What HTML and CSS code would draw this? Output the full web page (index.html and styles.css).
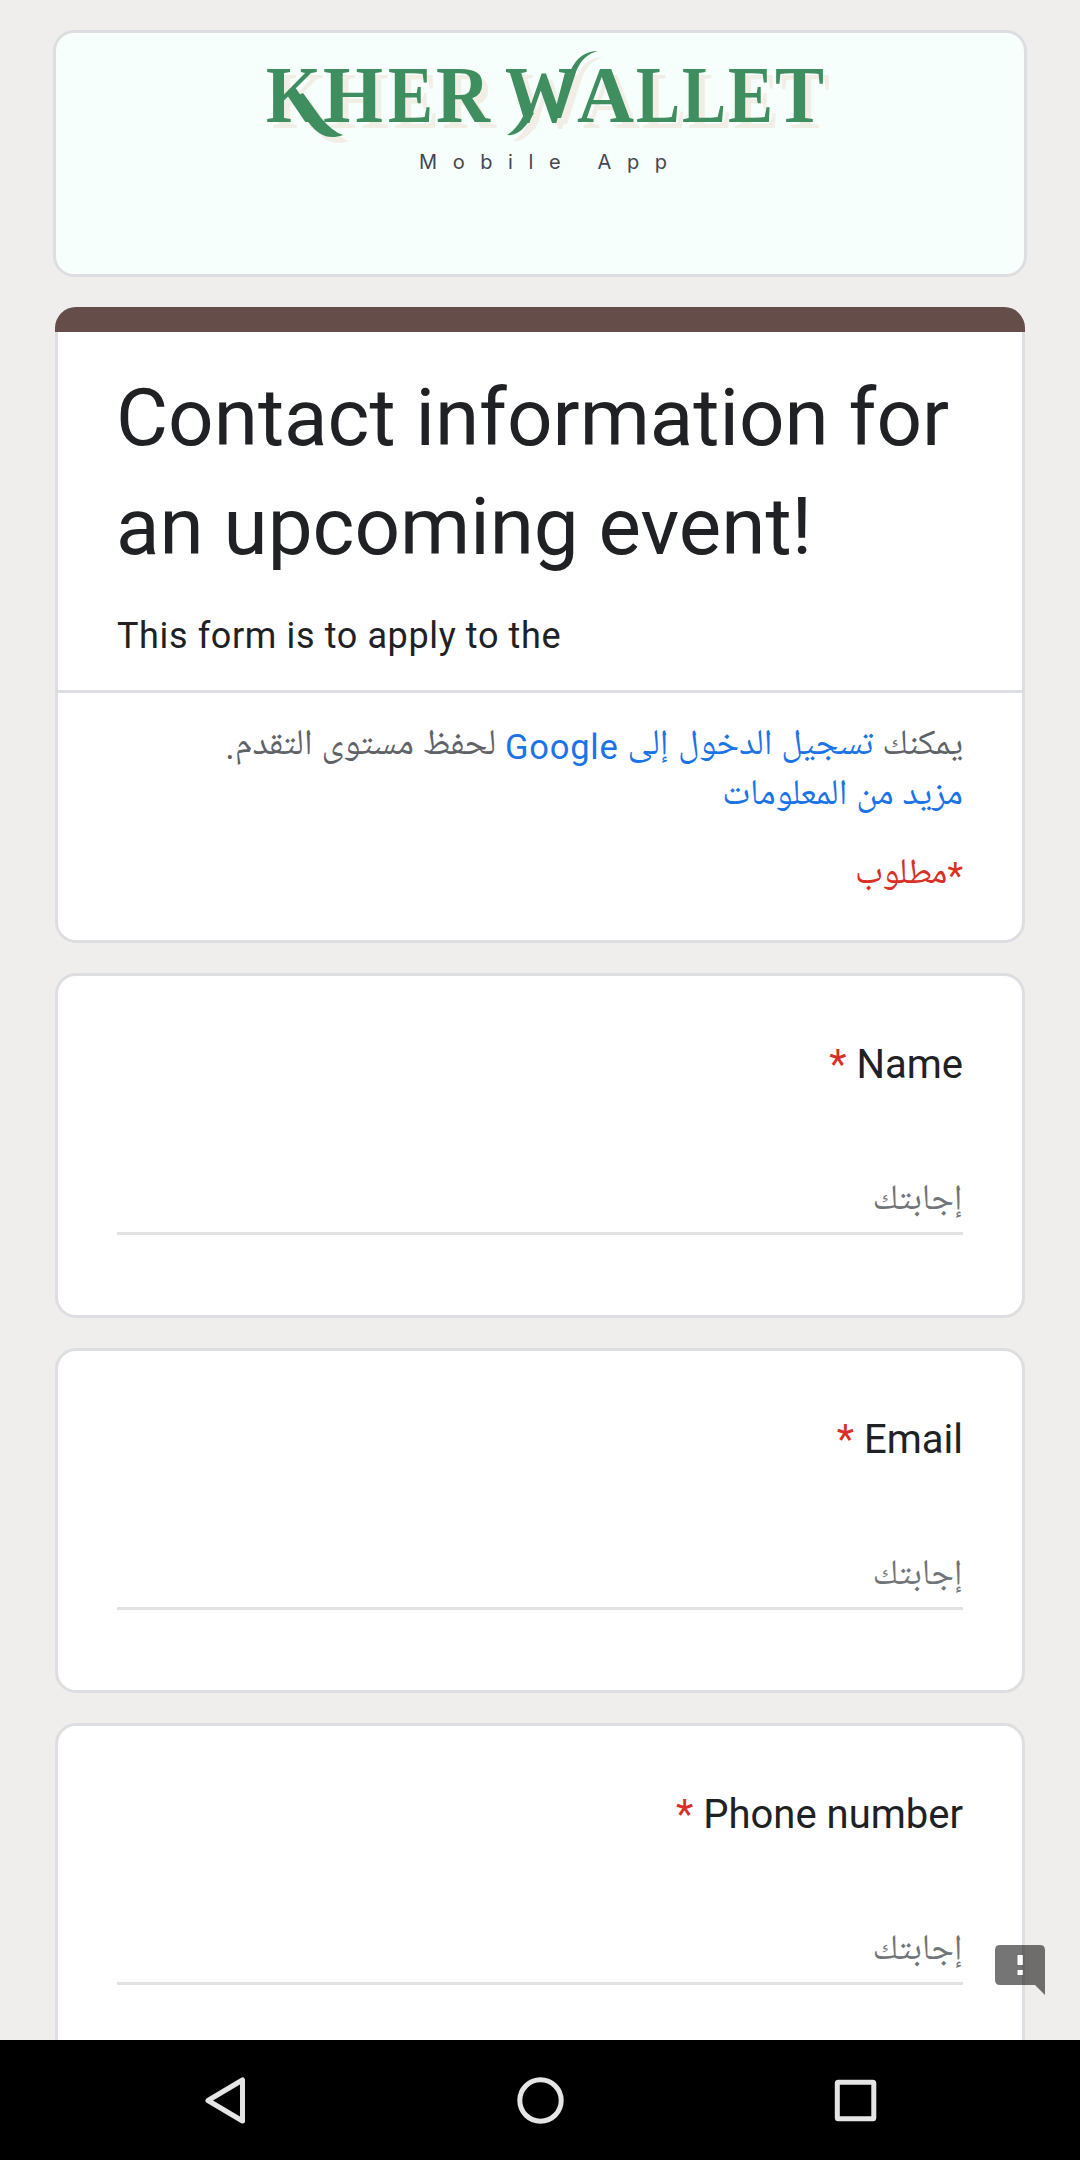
FILE: index.html
```html
<!DOCTYPE html>
<html lang="ar" dir="rtl">
<head>
<meta charset="utf-8">
<title>Contact information for an upcoming event!</title>
<link rel="stylesheet" href="styles.css">
</head>
<body>
<main class="form">
  <header class="banner">
    <svg class="logo" viewBox="0 0 974 247" direction="ltr">
      <g class="logo-ink">
        <text class="wordmark" y="92"><tspan x="213" textLength="55" lengthAdjust="spacingAndGlyphs">K</tspan><tspan x="270" textLength="60" lengthAdjust="spacingAndGlyphs">H</tspan><tspan x="335" textLength="45" lengthAdjust="spacingAndGlyphs">E</tspan><tspan x="383" textLength="54" lengthAdjust="spacingAndGlyphs">R</tspan></text>
        <text class="wordmark" y="92"><tspan x="452" textLength="70" lengthAdjust="spacingAndGlyphs">W</tspan><tspan x="524" textLength="57" lengthAdjust="spacingAndGlyphs">A</tspan><tspan x="583" textLength="44" lengthAdjust="spacingAndGlyphs">L</tspan><tspan x="629" textLength="44" lengthAdjust="spacingAndGlyphs">L</tspan><tspan x="675" textLength="45" lengthAdjust="spacingAndGlyphs">E</tspan><tspan x="722" textLength="49" lengthAdjust="spacingAndGlyphs">T</tspan></text>
        <path d="M238 68L256 93C266 106 276 110 290 105Q280 102 268 88L250 63Z"/>
        <path d="M474 78C468 92 462 100 454 105Q468 107 481 83Z"/>
        <path d="M503 88L517 42C523 27 533 21 545 21Q529 25 523 42L508 88Z"/>
      </g>
      <text class="tagline" x="366" y="138.500">Mobile App</text>
    </svg>
  </header>

  <section class="card intro">
    <div class="accent"></div>
    <div class="intro-text" dir="ltr">
      <h1>Contact information for<br>an upcoming event!</h1>
      <p class="description">This form is to apply to the</p>
    </div>
    <div class="notice">
      <p>يمكنك <a>تسجيل الدخول إلى <span class="latin">Google</span></a> لحفظ مستوى التقدم.<br><a>مزيد من المعلومات</a></p>
      <p class="required"><span class="star">*</span>مطلوب</p>
    </div>
  </section>

  <section class="card question">
    <h2>Name <span class="star">*</span></h2>
    <div class="answer">إجابتك</div>
  </section>
  <section class="card question">
    <h2>Email <span class="star">*</span></h2>
    <div class="answer">إجابتك</div>
  </section>
  <section class="card question">
    <h2>Phone number <span class="star">*</span></h2>
    <div class="answer">إجابتك</div>
  </section>
</main>

<svg class="report" viewBox="0 0 50 50"><path fill-rule="evenodd" d="M5 0H45Q50 0 50 5V50L40 40H5Q0 40 0 35V5Q0 0 5 0ZM22.500 10V20H28V10ZM22.500 25V30H28V25Z"/></svg>

<nav class="navbar" dir="ltr">
  <svg viewBox="0 0 60 60"><path d="M47.500 10V51L13 30.500Z"/></svg>
  <svg viewBox="0 0 60 60"><circle cx="30.500" cy="30.500" r="20.700"/></svg>
  <svg viewBox="0 0 60 60"><rect x="12.300" y="12.300" width="36.500" height="36.500" rx="1"/></svg>
</nav>
</body>
</html>
```
FILE: styles.css
```css
* { box-sizing: border-box; }
body {
  margin: 0;
  height: 2160px;
  overflow: hidden;
  display: flex;
  flex-direction: column;
  background: #efeeec;
  color: #202124;
  font-family: Roboto, "Noto Naskh Arabic UI", "Noto Naskh Arabic", "DejaVu Sans", sans-serif;
}
h1, h2, p { margin: 0; font-weight: 400; }
.form {
  height: 2040px;
  overflow: hidden;
  padding: 30px 55px 0;
  display: flex;
  flex-direction: column;
  gap: 30px;
}
.banner {
  flex: none;
  height: 247px;
  margin: 0 -2px;
  border: 3px solid #dcdee1;
  border-radius: 21px;
  background: #f6fffb;
}
.logo { display: block; width: 974px; height: 247px; margin: -3px; direction: ltr; }
.logo-ink { fill: #3f8e5f; filter: drop-shadow(6px 6px 0 #f1eee6); }
.wordmark { font: bold 81px "Liberation Serif", serif; }
.tagline { font: 20px Inter, sans-serif; fill: #45464f; letter-spacing: 15.600px; }
.card {
  flex: none;
  background: #fff;
  border: 3px solid #dcdee1;
  border-radius: 21px;
}
.intro { height: 636px; }
.accent {
  height: 25px;
  margin: -3px -3px 0;
  border-radius: 21px 21px 0 0;
  background: #654d49;
}
.intro-text {
  height: 361px;
  padding: 32px 59px 0 58px;
  border-bottom: 3px solid #dcdee1;
}
h1 { font-size: 80px; line-height: 109px; white-space: nowrap; }
.description { margin-top: 29px; padding-left: 1px; font-size: 36px; line-height: 50px; letter-spacing: .62px; }
.notice { padding: 29px 59px 0; font-size: 36px; line-height: 50px; color: #5f6368; white-space: nowrap; }
.notice a { color: #1a73e8; }
.latin { font-size: 34.500px; line-height: 1; letter-spacing: .75px; }
.notice .required { margin-top: 29px; color: #d93025; }
.question { height: 345px; padding: 59px 59px 0; }
h2 { font-size: 40px; line-height: 60px; }
.star { color: #d93025; }
.answer {
  height: 79px;
  margin-top: 61px;
  padding-top: 21px;
  border-bottom: 3px solid #e2e2e2;
  font-size: 36px;
  line-height: 50px;
  color: #70757a;
}
.report { position: absolute; left: 995px; top: 1945px; width: 50px; height: 50px; fill: #000; fill-opacity: .54; }
.navbar {
  height: 120px;
  padding: 0 195px;
  display: flex;
  align-items: center;
  justify-content: space-between;
  background: #000;
}
.navbar svg { width: 60px; height: 60px; fill: none; stroke: #e5e5e5; stroke-width: 5; stroke-linejoin: round; }
```
